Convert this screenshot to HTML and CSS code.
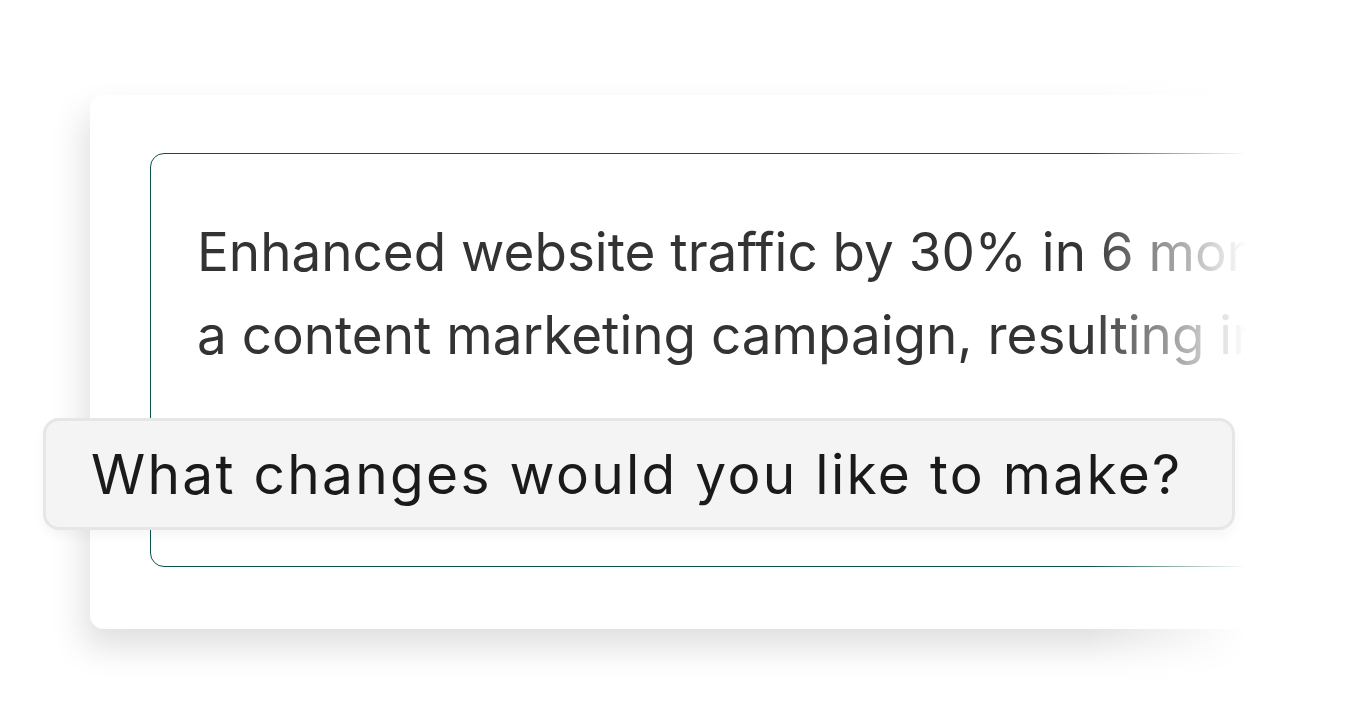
FILE: index.html
```html
<!DOCTYPE html>
<html lang="en">
<head>
    <meta charset="UTF-8">
    <meta name="viewport" content="width=device-width, initial-scale=1.0">
    <title>Edit Achievement</title>
    <link rel="stylesheet" href="styles.css">
</head>
<body>

    <div class="stage">
        <div class="fade">
            <div class="card">
                <div class="entry">
                    <p class="entry-line">Enhanced website traffic by 30% in 6 months through</p>
                    <p class="entry-line">a content marketing campaign, resulting in a 25%</p>
                </div>
            </div>
        </div>

        <!-- prompt sits over the card -->
        <div class="prompt">What changes would you like to make?</div>
    </div>

</body>
</html>
```
FILE: styles.css
```css
body {
    margin: 0;
    background-color: #fff;
    font-family: Inter, "Open Sans", sans-serif;
}
.stage {
    position: relative;
    height: 724px;
    overflow: hidden;
}
.fade {
    padding: 95px 0 0 90px;
    height: 629px;
    -webkit-mask-image: linear-gradient(to right, #000 1088px, transparent 1246px);
    mask-image: linear-gradient(to right, #000 1088px, transparent 1246px);
}
.card {
    width: 1210px;
    background-color: #fff;
    border-radius: 14px;
    padding: 58px 0 62px 60px;
    box-shadow: -6px 18px 34px rgba(0, 0, 0, 0.13);
}
.entry {
    border: 1.6px solid #0a5347;
    border-radius: 14px;
    padding: 57px 0 189px 46px;
    white-space: nowrap;
    overflow: hidden;
}
.entry-line {
    margin: 0;
    font-size: 53px;
    line-height: 83px;
    color: #333;
}
.prompt {
    position: absolute;
    left: 43px;
    top: 418px;
    width: 1192px;
    height: 112px;
    box-sizing: border-box;
    display: flex;
    align-items: center;
    padding-left: 45px;
    background-color: #f4f4f4;
    border: 3px solid #e6e6e6;
    border-radius: 16px;
    box-shadow: 0 6px 12px rgba(0, 0, 0, 0.04);
    font-size: 55px;
    letter-spacing: 2.3px;
    color: #1a1a1a;
    white-space: nowrap;
}
```
